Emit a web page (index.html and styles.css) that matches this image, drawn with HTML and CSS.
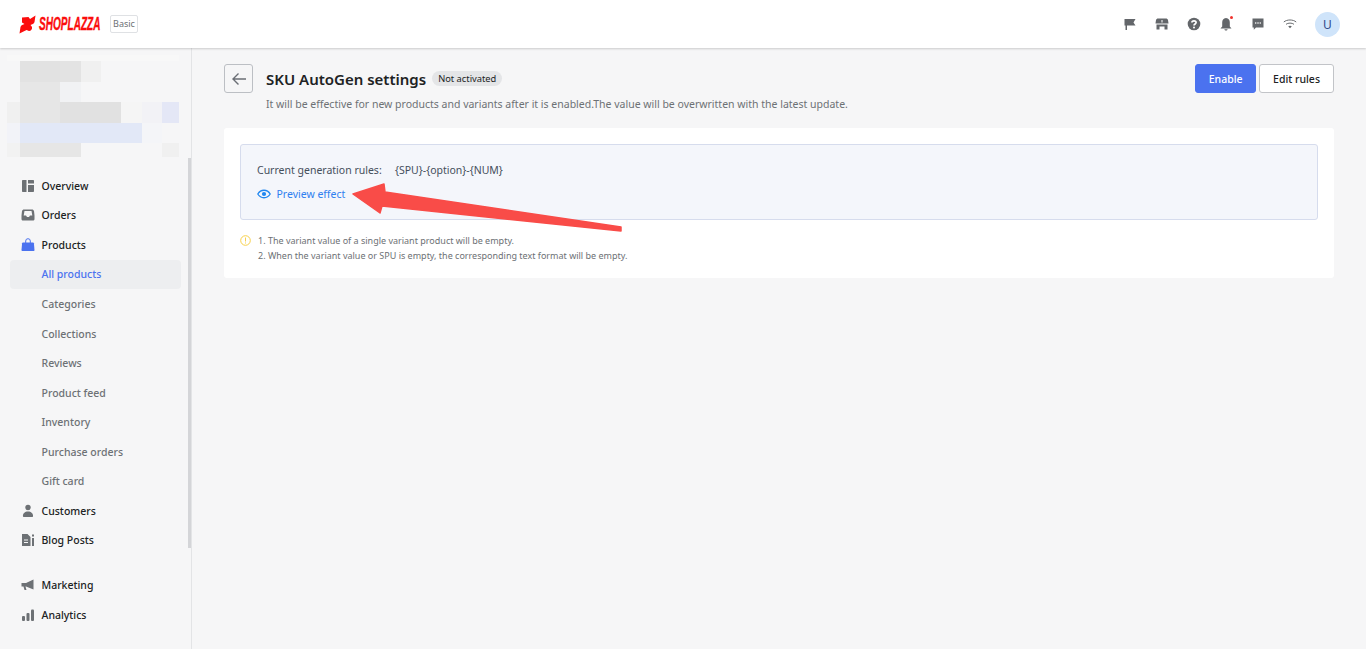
FILE: index.html
```html
<!DOCTYPE html>
<html lang="en">
<head>
<meta charset="utf-8">
<title>SKU AutoGen settings</title>
<link rel="stylesheet" href="styles.css">
</head>
<body>
<header class="topbar">
  <div class="brand">
    <svg class="logo-mark" viewBox="0 0 17 19"><path fill="#fb0d0d" d="M3 2.500 L9.500 2 L11 4 L16.500 .5 L15.500 7 C15 9 13 9.500 11.500 10 L13 12 C13.500 14 12 16 10 16 L7.500 15 L.5 18.500 L1.500 12 C2 10 4 9.500 5.500 9 L3 7.500 Z"/></svg>
    <span class="logo-text">SHOPLAZZA</span>
    <span class="plan">Basic</span>
  </div>
  <div class="top-icons">
    <svg class="ti" viewBox="0 0 14 14"><path d="M1.500 2h11L10.500 5.500 12.500 8.500H4v4.500H2.500V8.500h-1z"/></svg>
    <svg class="ti" viewBox="0 0 14 14"><path d="M3 1.500h8c1 0 1.500.5 2 1.500l.5 3.500H.5L1 3c.5-1 1-1.500 2-1.500z"/><path d="M1.500 7.500h11V12.500H9.500V9.500h-5v3H1.500z"/><path fill="#fff" d="M6 3h2v2.500H6z" opacity=".5"/></svg>
    <svg class="ti" viewBox="0 0 14 14"><circle cx="7" cy="7" r="6.300"/><path fill="none" stroke="#fff" stroke-width="1.700" d="M4.900 5.500C4.900 3.200 9.100 3.200 9.100 5.500 9.100 7 7 6.900 7 8.600"/><circle cx="7" cy="10.500" r="1" fill="#fff"/></svg>
    <span class="bell"><svg class="ti" viewBox="0 0 14 14"><path d="M7 1c2.700 0 3.800 2.300 3.800 4.500V9.500L12.500 11.500h-11L3.200 9.500V5.500C3.200 3.300 4.300 1 7 1zM5.400 12.200h3.200c0 1.800-3.200 1.800-3.200 0z"/></svg><i class="dot"></i></span>
    <svg class="ti" viewBox="0 0 14 14"><path d="M1.500 1.500h11v9H5L2.800 12.800v-2.300H1.500z"/><circle cx="4.700" cy="6" r=".8" fill="#fff"/><circle cx="7" cy="6" r=".8" fill="#fff"/><circle cx="9.300" cy="6" r=".8" fill="#fff"/></svg>
    <svg class="ti" viewBox="0 0 14 14"><g fill="none" stroke="#6a6d70" stroke-width="1"><path d="M.8 5C4 2.300 10 2.300 13.200 5"/><path d="M3 7.300C5 5.700 9 5.700 11 7.300"/></g><path d="M5.200 9.300C6.200 8.600 7.800 8.600 8.800 9.300L7 11.200z"/></svg>
    <span class="avatar">U</span>
  </div>
</header>
<div class="shell">
  <aside class="sidebar">
    <div class="mosaic">
      <i class="m-top"></i>
      <i class="m a1"></i><i class="m a2"></i><i class="m a3"></i>
      <i class="m b1"></i><i class="m b2"></i>
      <i class="m c1"></i><i class="m c2"></i><i class="m c3"></i><i class="m c4"></i><i class="m c5"></i><i class="m c6"></i>
      <i class="m d1"></i><i class="m d2"></i><i class="m d3"></i>
      <i class="m e1"></i><i class="m e2"></i><i class="m e3"></i>
    </div>
    <nav class="menu">
      <a class="item"><svg class="mi" viewBox="0 0 14 14"><path d="M2 1h3.500v12H2c-.6 0-1-.4-1-1V2c0-.6.4-1 1-1zM7 1h5c.6 0 1 .4 1 1v2.500H7zM7 6h6v6c0 .6-.4 1-1 1H7z"/></svg>Overview</a>
      <a class="item"><svg class="mi" viewBox="0 0 14 14"><path fill-rule="evenodd" d="M3 1.500h8c1 0 1.700.6 2 1.500l.5 4.500V11c0 1-.8 1.500-1.500 1.500H2c-.7 0-1.500-.5-1.500-1.500V7.500L1 3c.3-.9 1-1.500 2-1.500zM3.500 3 2.700 7.500H5L6 9h2l1-1.500h2.300L10.500 3z"/></svg>Orders</a>
      <a class="item"><svg class="mi blue" viewBox="0 0 14 14"><path d="M2 4.500h10c.5 0 .8.300.9.800l.6 6.700c0 .6-.4 1-1 1h-11c-.6 0-1-.4-1-1l.6-6.700c.1-.5.400-.8.900-.8z"/><path fill="none" stroke="#4b72ef" d="M4.700 6V3a2.300 2.300 0 0 1 4.600 0v3"/></svg>Products</a>
      <a class="item sub active">All products</a>
      <a class="item sub">Categories</a>
      <a class="item sub">Collections</a>
      <a class="item sub">Reviews</a>
      <a class="item sub">Product feed</a>
      <a class="item sub">Inventory</a>
      <a class="item sub">Purchase orders</a>
      <a class="item sub">Gift card</a>
      <a class="item"><svg class="mi" viewBox="0 0 14 14"><circle cx="7" cy="3.500" r="2.700"/><path d="M2 12.500c-.5-3 2-5 5-5s5.500 2 5 5c0 .3-.3.500-.6.500H2.600c-.3 0-.6-.2-.6-.5z"/></svg>Customers</a>
      <a class="item"><svg class="mi" viewBox="0 0 14 14"><path fill-rule="evenodd" d="M1 1h5.500L9.500 4v9H1zM3 6.500v1h4v-1zM3 9v1h4V9z"/><path d="M11 1.500h2v2h-2zM11 5h2v8h-2z"/></svg>Blog Posts</a>
      <a class="item gap"><svg class="mi" viewBox="0 0 14 14"><path d="M.5 5H5L12.500 1.500v10L5 8.500H4.500l1 3.500H3.500L2.500 8.500H.5z"/></svg>Marketing</a>
      <a class="item"><svg class="mi" viewBox="0 0 14 14"><rect x="1" y="8" width="3" height="5" rx="1"/><rect x="5.500" y="5" width="3" height="8" rx="1"/><rect x="10" y="1.500" width="3" height="11.500" rx="1"/></svg>Analytics</a>
    </nav>
    <div class="scrollbar"></div>
  </aside>
  <main class="content">
    <div class="page-head">
      <button class="back"><svg width="16" height="16" viewBox="0 0 16 16"><path fill="none" stroke="#6b6f76" stroke-width="1.400" d="M15 8H2M7.500 2.500 2 8l5.500 5.500"/></svg></button>
      <div class="heading">
        <div class="title-row"><h1>SKU AutoGen settings</h1><span class="tag">Not activated</span></div>
        <p class="desc">It will be effective for new products and variants after it is enabled.The value will be overwritten with the latest update.</p>
      </div>
      <div class="actions">
        <button class="btn primary">Enable</button>
        <button class="btn">Edit rules</button>
      </div>
    </div>
    <section class="card">
      <div class="rule-box">
        <div class="rule"><span class="rule-label">Current generation rules:</span><span>{SPU}-{option}-{NUM}</span></div>
        <a class="preview"><svg width="14" height="14" viewBox="0 0 14 14"><path fill="none" stroke="#1f86f0" stroke-width="1.300" d="M.8 7C3.800 2 10.200 2 13.200 7 10.200 12 3.800 12 .8 7z"/><circle cx="7" cy="7" r="2.100" fill="#1f86f0"/></svg><span>Preview effect</span></a>
      </div>
      <div class="notes">
        <svg class="warn" width="11" height="11" viewBox="0 0 11 11"><circle cx="5.500" cy="5.500" r="4.800" fill="none" stroke="#f7d04a"/><path stroke="#f7d04a" d="M5.500 2.500v4M5.500 7.500v1"/></svg>
        <div>
          <p>1. The variant value of a single variant product will be empty.</p>
          <p>2. When the variant value or SPU is empty, the corresponding text format will be empty.</p>
        </div>
      </div>
    </section>
  </main>
</div>
<svg class="arrow" width="280" height="55" viewBox="350 180 280 55"><path fill="#f94c48" stroke="#f94c48" stroke-width="1.500" stroke-linejoin="round" d="M353 194 L384 184 L385 192 L621 227 L621 231 L382 206 L380 213 Z"/></svg>
</body>
</html>
```
FILE: styles.css
```css
* { box-sizing: border-box; }
html, body { margin: 0; height: 100%; overflow: hidden; }
body { font-family: "Noto Sans", sans-serif; font-size: 11px; color: #202223; background: #f6f6f7; }
p, h1 { margin: 0; }

.topbar { height: 48px; background: #fff; display: flex; align-items: center; justify-content: space-between; padding: 0 26px 0 19px; box-shadow: 0 1px 2px rgba(0,0,0,.18); position: relative; z-index: 2; }
.brand { display: flex; align-items: center; }
.logo-mark { width: 17px; height: 19px; }
.logo-text { font-family: "Liberation Sans", sans-serif; font-weight: 700; font-style: italic; font-size: 19px; color: #fb0d0d; margin-left: 3px; width: 61px; display: inline-block; white-space: nowrap; transform: scaleX(.53); transform-origin: left center; -webkit-text-stroke: .4px #fb0d0d; }
.plan { margin-left: 10px; width: 28px; height: 18px; text-align: center; line-height: 16px; border: 1px solid #dfe1e4; border-radius: 2px; color: #6d7175; font-size: 9px; }
.top-icons { display: flex; align-items: center; gap: 18px; }
.ti { width: 14px; height: 14px; fill: #63666a; display: block; }
.bell { position: relative; display: block; }
.dot { position: absolute; top: -1px; right: 0; width: 3px; height: 3px; border-radius: 50%; background: #f0322c; }
.avatar { width: 25px; height: 25px; border-radius: 50%; background: #cfe4fa; color: #2f4a8a; font-size: 12px; text-align: center; line-height: 25px; }

.shell { display: flex; height: 601px; }
.sidebar { width: 192px; flex: none; border-right: 1px solid #e3e4e6; position: relative; overflow: hidden; }
.mosaic { display: grid; margin: 7px 0 0 7px; width: 172px; height: 102px; grid-template-columns: 13px 40px 21px 20px 20px 21px 20px 17px; grid-template-rows: 6px 21px 20px 21px 20px 14px; }
.m-top { grid-column: 1 / -1; grid-row: 1; background: #f8f8f8; }
.a1 { grid-row: 2; grid-column: 2; background: #e2e2e2; }
.a2 { grid-row: 2; grid-column: 3; background: #e3e3e3; }
.a3 { grid-row: 2; grid-column: 4; background: #f0f0f0; }
.b1 { grid-row: 3; grid-column: 2; background: #e6e6e6; }
.b2 { grid-row: 3; grid-column: 3; background: #f1f2f4; }
.c1 { grid-row: 4; grid-column: 1; background: #f0f0f0; }
.c2 { grid-row: 4; grid-column: 2; background: #e6e6e6; }
.c3 { grid-row: 4; grid-column: 3 / 6; background: #e1e1e1; }
.c4 { grid-row: 4; grid-column: 6; background: #f5f5f5; }
.c5 { grid-row: 4; grid-column: 7; background: #f2f2f6; }
.c6 { grid-row: 4; grid-column: 8; background: #e4e7f6; }
.d1 { grid-row: 5; grid-column: 1; background: #f2f3f8; }
.d2 { grid-row: 5; grid-column: 2 / 7; background: #e2e8f7; }
.d3 { grid-row: 5; grid-column: 7; background: #f4f5f8; }
.e1 { grid-row: 6; grid-column: 1; background: #f2f2f2; }
.e2 { grid-row: 6; grid-column: 2 / 4; background: #e6e6e6; }
.e3 { grid-row: 6; grid-column: 8; background: #f0f0f0; }

.menu { display: flex; flex-direction: column; margin-top: 14px; padding: 0 10px; }
.item { height: 29.550px; display: flex; align-items: center; padding-left: 11px; color: #202223; font-weight: 500; font-size: 10.500px; white-space: nowrap; }
.mi { width: 14px; height: 14px; fill: #6d7175; margin-right: 6.500px; flex: none; }
.mi.blue { fill: #4b72ef; }
.sub { padding-left: 31.500px; color: #6d7175; font-weight: 500; }
.active { background: #edeef0; border-radius: 4px; color: #4b72ef; }
.gap { margin-top: 15.200px; }
.scrollbar { position: absolute; right: 0; top: 110px; width: 3px; height: 390px; background: #d4d5d8; }

.content { flex: 1; padding: 16px 32px 0; min-width: 0; }
.page-head { display: flex; align-items: flex-start; height: 64px; }
.back { width: 29px; height: 29px; background: transparent; border: 1px solid #bcbfc4; border-radius: 3px; padding: 0; display: flex; align-items: center; justify-content: center; margin-right: 13px; flex: none; }
.heading { flex: 1; }
.title-row { display: flex; align-items: center; height: 29px; }
h1 { font-size: 15px; font-weight: 600; color: #202223; }
.tag { margin-left: 6px; background: #e4e5e7; border-radius: 8px; height: 15px; padding: 0 6px; font-size: 9.300px; line-height: 15px; color: #202223; }
.desc { margin-top: 4px; font-size: 10.500px; color: #6d7175; }
.actions { display: flex; gap: 3px; }
.btn { height: 29px; padding: 0 13px; background: #fff; border: 1px solid #c2c4c8; border-radius: 3px; font: 500 10.500px "Noto Sans", sans-serif; color: #202223; }
.btn.primary { padding: 0 12.500px; background: #4b72ef; border-color: #4b72ef; color: #fff; }
.card { background: #fff; border-radius: 3px; padding: 16px; height: 150px; }
.rule-box { height: 76px; background: #f4f6fb; border: 1px solid #d6dced; border-radius: 3px; padding: 17px 16px 0; }
.rule { display: flex; font-size: 10.500px; color: #454f5b; height: 16px; line-height: 16px; }
.rule-label { width: 138px; }
.preview { display: flex; align-items: center; margin-top: 8px; color: #2f7ff0; font-size: 10.500px; height: 16px; }
.preview svg { margin-right: 5.500px; }
.notes { display: flex; margin-top: 13px; color: #6d7175; font-size: 9px; line-height: 15px; }
.warn { margin: 2px 7px 0 0; flex: none; }
.arrow { position: absolute; left: 350px; top: 180px; z-index: 3; }
```
